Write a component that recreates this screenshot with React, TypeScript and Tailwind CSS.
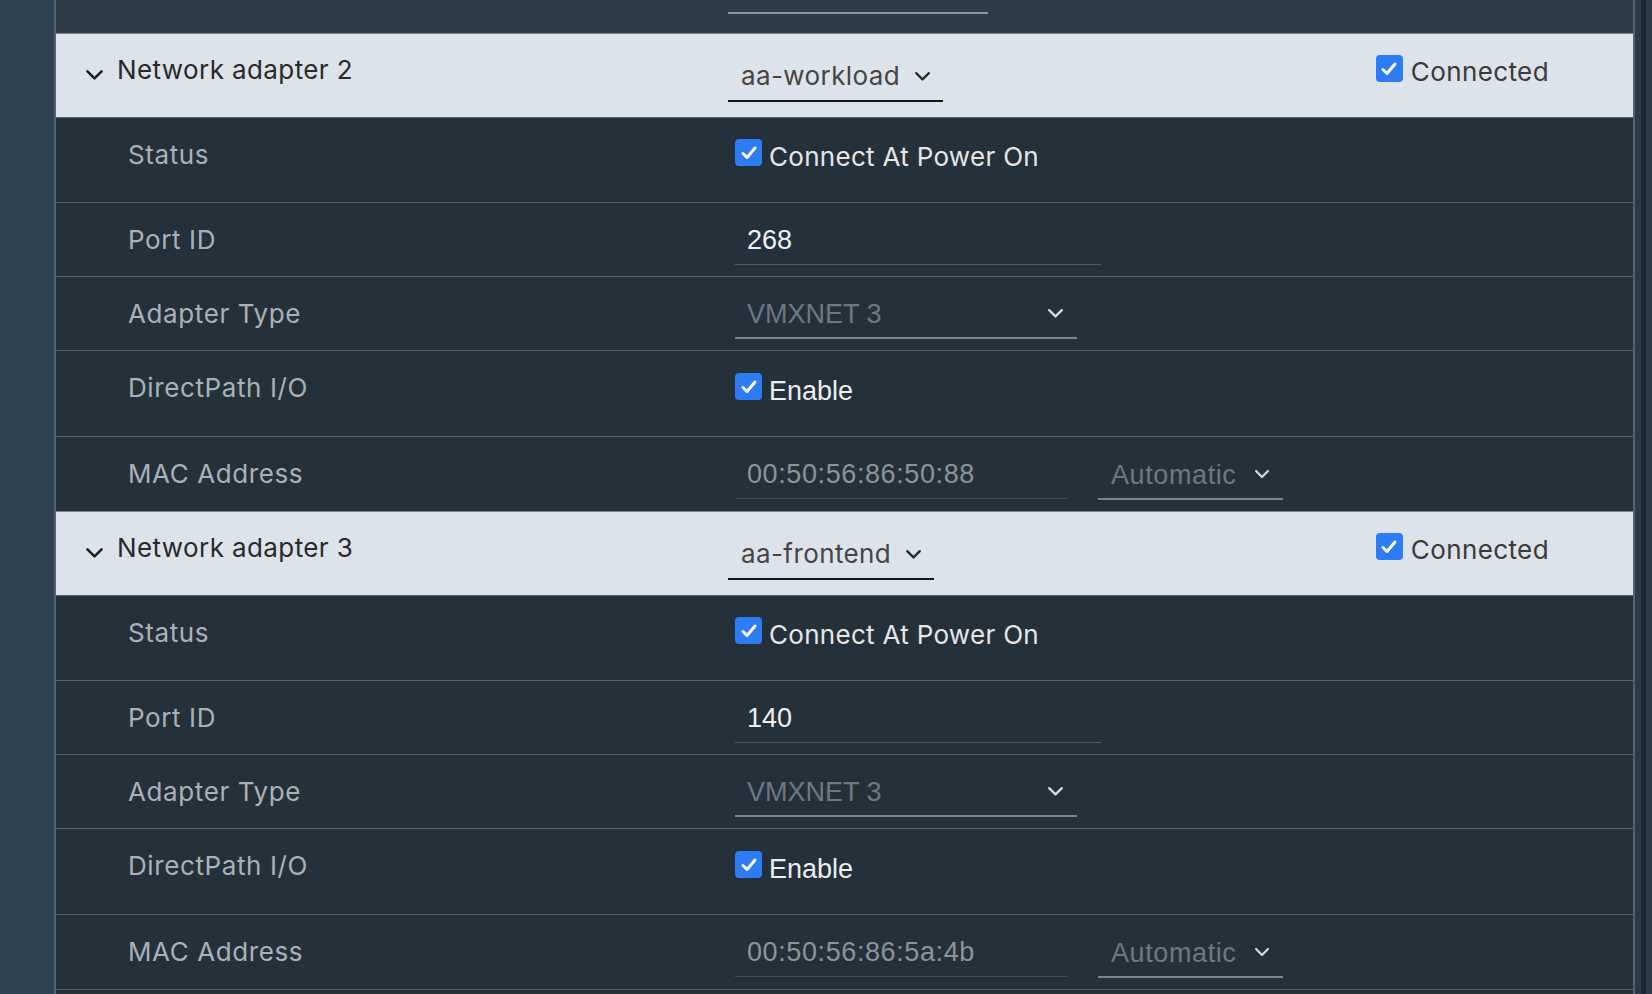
import React from "react";

type Adapter = {
  name: string;
  network: string;
  portId: string;
  mac: string;
};

const adapters: Adapter[] = [
  { name: "Network adapter 2", network: "aa-workload", portId: "268", mac: "00:50:56:86:50:88" },
  { name: "Network adapter 3", network: "aa-frontend", portId: "140", mac: "00:50:56:86:5a:4b" },
];

const Chevron = ({ className = "", color = "currentColor", w = 16 }: { className?: string; color?: string; w?: number }) => (
  <svg width={w} height={w * 0.62} viewBox="0 0 16 10" className={className} fill="none">
    <polyline points="2,2 8,8 14,2" stroke={color} strokeWidth="2.2" strokeLinecap="round" strokeLinejoin="round" />
  </svg>
);

const CheckBox = () => (
  <div className="flex h-[27px] w-[27px] shrink-0 items-center justify-center rounded-[4px] bg-[#2e7cf4]">
    <svg width="18" height="16" viewBox="0 0 18 16" fill="none">
      <polyline points="3,8.5 7,12.5 15,3" stroke="#ffffff" strokeWidth="3" strokeLinecap="round" strokeLinejoin="round" />
    </svg>
  </div>
);

// one property row: label on the left, control on the right
const Row = ({ label, height, children }: { label: string; height: string; children: React.ReactNode }) => (
  <div className={`flex border-t border-[#56626c] bg-[#25313a] ${height}`}>
    <div className="w-[679px] shrink-0 pl-[72px] pt-[21px] text-[26px] leading-[32px] tracking-[0.6px] text-[#a9b1b8]">{label}</div>
    <div className="flex items-start pt-[21px]">{children}</div>
  </div>
);

const AdapterSection = ({ adapter }: { adapter: Adapter }) => {
  return (
    <div>
      {/* header bar */}
      <div className="flex h-[84px] items-start border-t border-[#7d8891] bg-[#dce3ea]">
        <div className="flex w-[672px] shrink-0 items-start pl-[29px] pt-[20px]">
          <Chevron color="#1e1e1e" w={19} className="mt-[15px]" />
          <span className="ml-[13px] text-[26px] leading-[32px] tracking-[0.4px] text-[#2a2a2a]">{adapter.name}</span>
        </div>
        <div className="mt-[26px] flex h-[42px] items-start border-b-2 border-[#151515] pl-[13px] pr-[12px]">
          <span className="text-[26px] leading-[32px] tracking-[0.4px] text-[#454545]">{adapter.network}</span>
          <Chevron color="#2a2a2a" w={17} className="ml-[14px] mt-[11px]" />
        </div>
        <div className="ml-auto mr-[84px] mt-[21px] flex items-start gap-[8px]">
          <CheckBox />
          <span className="mt-[1px] text-[26px] leading-[32px] tracking-[0.4px] text-[#3a3a3a]">Connected</span>
        </div>
      </div>

      <Row label="Status" height="h-[85px]">
        <div className="flex items-start gap-[7px]">
          <CheckBox />
          <span className="mt-[2px] text-[26px] leading-[32px] tracking-[0.3px] text-[#e4e6e8]">Connect At Power On</span>
        </div>
      </Row>

      <Row label="Port ID" height="h-[74px]">
        <div className="h-[41px] w-[366px] border-b border-[#5e5852] pl-[12px] font-['Liberation_Sans',Arial,sans-serif] text-[27px] leading-[32px] text-[#eef0f2]">
          {adapter.portId}
        </div>
      </Row>

      <Row label="Adapter Type" height="h-[74px]">
        <div className="flex h-[41px] w-[342px] items-start justify-between border-b-2 border-[#7a8590] pl-[12px] pr-[13px] font-['Liberation_Sans',Arial,sans-serif] text-[27px] leading-[32px] text-[#6c7983]">
          <span>VMXNET 3</span>
          <Chevron color="#d5dadf" w={17} className="mt-[10px]" />
        </div>
      </Row>

      <Row label="DirectPath I/O" height="h-[86px]">
        <div className="flex items-start gap-[7px] pt-[1px]">
          <CheckBox />
          <span className="mt-[2px] font-['Liberation_Sans',Arial,sans-serif] text-[27px] leading-[32px] text-[#eceef0]">Enable</span>
        </div>
      </Row>

      <Row label="MAC Address" height="h-[75px]">
        <div className="flex items-start gap-[31px] font-['Liberation_Sans',Arial,sans-serif] text-[27px] leading-[32px] tracking-[0.6px]">
          <div className="h-[41px] w-[332px] border-b border-[#4b4d4c] pl-[12px] text-[#8a949c]">{adapter.mac}</div>
          <div className="mt-[1px] flex h-[41px] w-[185px] items-start justify-between border-b-2 border-[#7a8590] pl-[13px] pr-[13px] text-[#6c7983]">
            <span>Automatic</span>
            <Chevron color="#d5dadf" w={16} className="mt-[10px]" />
          </div>
        </div>
      </Row>
    </div>
  );
};

export default function App() {
  return (
    <div className="flex h-screen w-full overflow-hidden bg-[#2f4252] font-['Inter','Noto_Sans',sans-serif]">
      {/* left strip */}
      <div className="w-[54px] shrink-0 bg-[#2f4252]" />

      {/* main panel */}
      <div className="w-[1581px] shrink-0 border-x-2 border-[#55626d] bg-[#25313a]">
        {/* tail of the previous section */}
        <div className="flex h-[33px] bg-[#2e3c48]">
          <div className="w-[672px] shrink-0" />
          <div className="h-[14px] w-[260px] border-b-2 border-[#8d97a1]" />
        </div>
        {adapters.map((a) => (
          <AdapterSection key={a.name} adapter={a} />
        ))}
        <div className="border-t border-[#56626c]" />
      </div>

      {/* right scroll edge */}
      <div className="flex flex-1">
        <div className="w-[6px] bg-[#2b3a47]" />
        <div className="w-[5px] bg-[#1c272f]" />
        <div className="flex-1 bg-[#2b3a47]" />
      </div>
    </div>
  );
}
